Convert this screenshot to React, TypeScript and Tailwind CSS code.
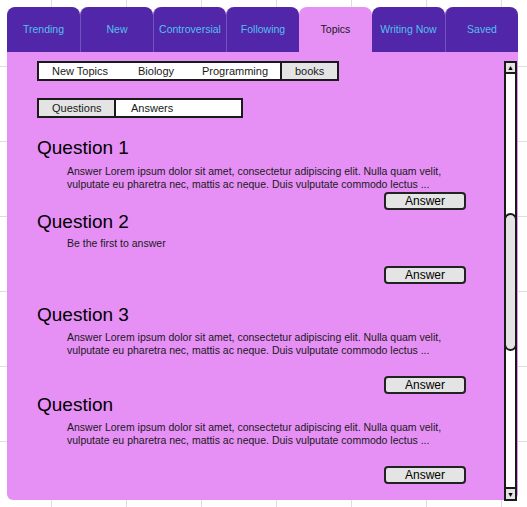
const tabs = ['Trending', 'New', 'Controversial', 'Following', 'Topics', 'Writing Now', 'Saved']

const lorem = (
    <>
        Answer Lorem ipsum dolor sit amet, consectetur adipiscing elit. Nulla quam velit,
        <br />
        vulputate eu pharetra nec, mattis ac neque. Duis vulputate commodo lectus ...
    </>
)

const questions = [
    { title: 'Question 1', body: lorem, gap: 'mt-[6px]', btn: 'mt-[1px]' },
    { title: 'Question 2', body: <>Be the first to answer</>, gap: 'mt-[4px]', btn: 'mt-[16px]', top: 'mt-[1px]' },
    { title: 'Question 3', body: lorem, gap: 'mt-[5px]', btn: 'mt-[19px]', top: 'mt-[20px]' },
    { title: 'Question', body: lorem, gap: 'mt-[5px]', btn: 'mt-[19px]' },
]

function Scrollbar() {
    return (
        <div className="mt-[9px] mr-[1px] w-[13px] h-[440px] flex flex-col border-2 border-[#1a1a1a] bg-white shrink-0">
            <div className="h-[11px] border-b-2 border-[#1a1a1a] bg-[#e4e4e4] flex items-center justify-center text-[7px] leading-none text-black">▲</div>
            <div className="h-[139px]" />
            <div className="-mx-[2px] h-[138px] rounded-[7px] border-2 border-[#1a1a1a] bg-[#e4e4e4]" />
            <div className="flex-1" />
            <div className="h-[12px] border-t-2 border-[#1a1a1a] bg-[#e4e4e4] flex items-center justify-center text-[7px] leading-none text-black">▼</div>
        </div>
    )
}

export default function App() {
    return (
        <div className="w-[527px] h-[507px] overflow-hidden bg-white bg-[linear-gradient(to_right,#dedede_1px,transparent_1px),linear-gradient(to_bottom,#dedede_1px,transparent_1px)] bg-[size:75px_75px] bg-[position:51px_66px] font-['Liberation_Sans',Arial,sans-serif] pt-[7px] pl-[7px]">
            <div className="w-[511px]">
                {/* Tabs */}
                <div className="flex h-[45px]">
                    {tabs.map((t, i) => (
                        <div
                            key={t}
                            className={
                                'w-[73px] rounded-t-[8px] flex items-center justify-center text-[10.5px] ' +
                                (t === 'Topics'
                                    ? 'bg-[#e690f6] text-[#1a1a1a]'
                                    : 'bg-[#5126a9] text-[#52c0ef]') +
                                (i > 0 && t !== 'Topics' && tabs[i - 1] !== 'Topics' ? ' border-l border-[#7152c2]' : '')
                            }
                        >
                            {t}
                        </div>
                    ))}
                </div>

                {/* Panel */}
                <div className="h-[448px] bg-[#e690f6] rounded-b-[6px] flex">
                    <div className="flex-1 pl-[30px] pt-[9px] text-[#1a1a1a]">
                        {/* topic filters */}
                        <div className="w-[302px] h-[20px] flex border-2 border-[#1a1a1a] bg-white text-[11px] leading-[16px]">
                            <div className="w-[84px] pl-[13px]">New Topics</div>
                            <div className="w-[64px] pl-[15px]">Biology</div>
                            <div className="w-[93px] pl-[15px]">Programming</div>
                            <div className="flex-1 border-l-2 border-[#1a1a1a] bg-[#e4e4e4] pl-[13px]">books</div>
                        </div>

                        <div className="mt-[17px] w-[206px] h-[20px] flex border-2 border-[#1a1a1a] bg-white text-[11px] leading-[16px]">
                            <div className="w-[77px] pl-[13px] bg-[#e4e4e4] border-r-2 border-[#1a1a1a]">Questions</div>
                            <div className="flex-1 pl-[15px]">Answers</div>
                        </div>

                        {/* questions */}
                        <div className="mt-[19px]">
                            {questions.map((q) => (
                                <div key={q.title} className={q.top ?? ''}>
                                    <div className="h-[22px] text-[19px] leading-[22px] text-black">{q.title}</div>
                                    <p className={'pl-[30px] text-[10.5px] leading-[13px] ' + q.gap}>{q.body}</p>
                                    <div className={'ml-[347px] w-[82px] h-[18px] rounded-[4px] border-2 border-[#222] bg-[#e4e4e4] flex items-center justify-center text-[12px] text-black ' + q.btn}>
                                        Answer
                                    </div>
                                </div>
                            ))}
                        </div>
                    </div>
                    <Scrollbar />
                </div>
            </div>
        </div>
    )
}
